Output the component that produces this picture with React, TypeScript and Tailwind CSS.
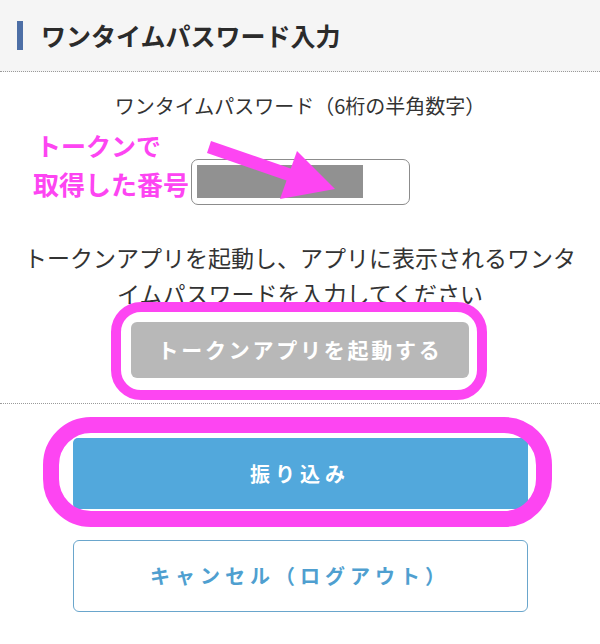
export default function App() {
  return (
    <div
      className="relative w-[600px] h-[644px] bg-white overflow-hidden"
      style={{ fontFamily: '"Noto Sans CJK JP", "Noto Sans", sans-serif' }}
    >
      {/* ヘッダー */}
      <div className="h-[72px] bg-[#f5f5f5] border-b border-dotted border-[#9a9a9a] flex items-center pl-[17px]">
        <span className="w-[6px] h-[29px] bg-[#4d6fa6] mr-[18px]" />
        <h1 className="text-[25px] font-bold text-[#2b2b2b] leading-none">ワンタイムパスワード入力</h1>
      </div>

      {/* 入力エリア */}
      <div className="flex flex-col items-center pt-[20px] pb-[25px] border-b border-dotted border-[#9a9a9a]">
        <p className="text-[20px] leading-[28px] text-[#333]">ワンタイムパスワード（6桁の半角数字）</p>
        <div className="mt-[39px] w-[219px] h-[46px] border border-[#8c8c8c] rounded-[7px] px-[5px] py-[5px]">
          <div className="w-[166px] h-[33px] bg-[#919191]" />
        </div>
        <p className="mt-[34px] text-[23px] leading-[36px] text-[#333] text-center px-[20px]">
          トークンアプリを起動し、アプリに表示されるワンタイムパスワードを入力してください
        </p>
        <div className="relative mt-[11px]">
          <button className="w-[338px] h-[56px] rounded-[6px] bg-[#b8b8b8] text-white text-[21px] font-bold tracking-[0.13em]">
            トークンアプリを起動する
          </button>
          <div className="absolute -left-[20px] -right-[18px] -top-[20px] -bottom-[22px] rounded-[30px] border-[10px] border-[#fd45f2] pointer-events-none" />
        </div>
      </div>

      {/* ボタン */}
      <div className="flex flex-col items-center pt-[34px]">
        <div className="relative">
          <button className="w-[455px] h-[71px] rounded-[5px] bg-[#52a8dc] text-white text-[20px] font-bold tracking-[0.25em]">
            振り込み
          </button>
          <div className="absolute -left-[30px] -right-[24px] -top-[21px] -bottom-[18px] rounded-[48px] border-[16px] border-[#fd45f2] pointer-events-none" />
        </div>
        <button className="mt-[31px] w-[455px] h-[72px] rounded-[6px] border border-[#6aa6cc] bg-white text-[#4f9fd0] text-[20px] font-bold tracking-[0.25em]">
          キャンセル（ログアウト）
        </button>
      </div>

      {/* 注釈 */}
      <div className="absolute left-[36px] top-[128px] text-[25px] leading-[34px] font-bold text-[#fd45f2]">トークンで</div>
      <div className="absolute left-[33px] top-[167px] text-[26px] leading-[34px] font-bold text-[#fd45f2]">取得した番号</div>
      <svg className="absolute left-0 top-0 pointer-events-none" width="600" height="644" viewBox="0 0 600 644">
        <polygon points="211,141 292,169 288,181 207,153" fill="#fd45f2" />
        <polygon points="297,151 335,189 280,199" fill="#fd45f2" />
      </svg>
    </div>
  );
}
